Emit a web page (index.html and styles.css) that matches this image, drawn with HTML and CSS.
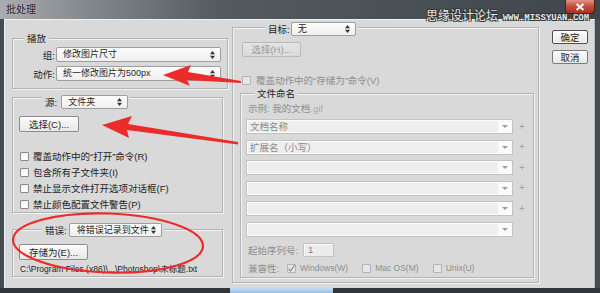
FILE: index.html
```html
<!DOCTYPE html>
<html lang="zh-CN">
<head>
    <meta charset="UTF-8">
    <title>批处理</title>
    <link rel="stylesheet" href="styles.css">
</head>
<body>
    <div class="window">
        <div class="titlebar">
            <span class="title">批处理</span>
            <span class="close">
                <svg width="10" height="8" viewBox="0 0 10 8"><path d="M1.5 1 8.5 7 M8.5 1 1.5 7" stroke="#fff" stroke-width="2"/></svg>
            </span>
        </div>
        <div class="watermark">思缘设计论坛 <span class="site">WWW.MISSYUAN.COM</span></div>

        <div class="client">
            <div class="col-left">
                <div class="group g-play">
                    <div class="group-head legend-play"><span>播放</span></div>
                    <div class="field-row first">
                        <span class="label">组:</span>
                        <div class="select w-action"><span>修改图片尺寸</span><svg class="updown" width="5" height="8" viewBox="0 0 5 8"><path d="M0 3.2 2.5 0 5 3.2Z M0 4.8 2.5 8 5 4.8Z"/></svg></div>
                    </div>
                    <div class="field-row">
                        <span class="label">动作:</span>
                        <div class="select w-action"><span>统一修改图片为500px</span><svg class="updown" width="5" height="8" viewBox="0 0 5 8"><path d="M0 3.2 2.5 0 5 3.2Z M0 4.8 2.5 8 5 4.8Z"/></svg></div>
                    </div>
                </div>

                <div class="group g-source">
                    <div class="group-head legend-source">
                        <span class="head-label">源:</span>
                        <div class="select small w-source"><span>文件夹</span><svg class="updown" width="5" height="8" viewBox="0 0 5 8"><path d="M0 3.2 2.5 0 5 3.2Z M0 4.8 2.5 8 5 4.8Z"/></svg></div>
                    </div>
                    <div class="btn btn-choose">选择(C)...</div>
                    <div class="checks">
                        <div class="check-row"><span class="box"></span>覆盖动作中的“打开”命令(R)</div>
                        <div class="check-row"><span class="box"></span>包含所有子文件夹(I)</div>
                        <div class="check-row"><span class="box"></span>禁止显示文件打开选项对话框(F)</div>
                        <div class="check-row"><span class="box"></span>禁止颜色配置文件警告(P)</div>
                    </div>
                </div>

                <div class="group g-error">
                    <div class="group-head legend-error">
                        <span class="head-label">错误:</span>
                        <div class="select small w-error"><span>将错误记录到文件</span><svg class="updown" width="5" height="8" viewBox="0 0 5 8"><path d="M0 3.2 2.5 0 5 3.2Z M0 4.8 2.5 8 5 4.8Z"/></svg></div>
                    </div>
                    <div class="btn btn-save">存储为(E)...</div>
                    <div class="path">C:\Program Files (x86)\...\Photoshop\未标题.txt</div>
                </div>
            </div>

            <div class="group col-right">
                <div class="group-head legend-target">
                    <span class="head-label dark">目标:</span>
                    <div class="select small w-target"><span>无</span><svg class="updown" width="5" height="8" viewBox="0 0 5 8"><path d="M0 3.2 2.5 0 5 3.2Z M0 4.8 2.5 8 5 4.8Z"/></svg></div>
                </div>
                <div class="btn disabled btn-choose-h">选择(H)...</div>
                <div class="check-row disabled save-row"><span class="box"></span>覆盖动作中的“存储为”命令(V)</div>

                <div class="group g-naming">
                    <div class="group-head legend-naming"><span>文件命名</span></div>
                    <div class="example">示例: 我的文档<span class="ext">.gif</span></div>
                    <div class="combos">
                        <div class="combo-row"><div class="combo"><span class="field">文档名称</span><span class="arrow"></span></div><span class="plus">+</span></div>
                        <div class="combo-row"><div class="combo"><span class="field">扩展名（小写）</span><span class="arrow"></span></div><span class="plus">+</span></div>
                        <div class="combo-row"><div class="combo"><span class="field"></span><span class="arrow"></span></div><span class="plus">+</span></div>
                        <div class="combo-row"><div class="combo"><span class="field"></span><span class="arrow"></span></div><span class="plus">+</span></div>
                        <div class="combo-row"><div class="combo"><span class="field"></span><span class="arrow"></span></div><span class="plus">+</span></div>
                        <div class="combo-row"><div class="combo"><span class="field"></span><span class="arrow"></span></div></div>
                    </div>
                    <div class="seq-row">
                        <span class="seq-label">起始序列号:</span>
                        <span class="seq-input">1</span>
                    </div>
                    <div class="compat-row">
                        <span class="compat-label">兼容性:</span>
                        <span class="opt"><span class="box checked"><svg width="9" height="9" viewBox="0 0 9 9"><path d="M1.5 4.5 3.5 7 7.8 0.8" fill="none" stroke="#8a8a8a" stroke-width="1.1"/></svg></span>Windows(W)</span>
                        <span class="opt"><span class="box"></span>Mac OS(M)</span>
                        <span class="opt"><span class="box"></span>Unix(U)</span>
                    </div>
                </div>
            </div>

            <div class="col-buttons">
                <div class="btn btn-main">确定</div>
                <div class="btn btn-side">取消</div>
            </div>
        </div>

        <div class="frame-bottom"><span class="glow"></span></div>

        <!-- annotations drawn on top of the screenshot -->
        <svg class="marks" width="600" height="293" viewBox="0 0 600 293">
            <g fill="#ec2b2b">
                <path d="M163 75 L191 65 L188 72 L241 81 L241 83 L187 80 L190 86 Z"/>
                <path d="M102 125 L132 116 L128 124 L238 142 L238 144.5 L127 130 L129 138 Z"/>
            </g>
            <ellipse cx="108" cy="243" rx="95" ry="29.5" fill="none" stroke="#ec2b2b" stroke-width="2.2" transform="rotate(2 108 243)"/>
        </svg>
    </div>
</body>
</html>
```

FILE: styles.css
```css
* {
    box-sizing: border-box;
}
body {
    margin: 0;
    width: 600px;
    height: 293px;
    overflow: hidden;
    font-family: "Liberation Sans", "Noto Sans CJK SC", sans-serif;
    font-size: 9.5px;
    color: #1e1e1e;
}
.window {
    position: relative;
    width: 600px;
    height: 293px;
    display: flex;
    flex-direction: column;
    background: #454c52;
}
.titlebar {
    height: 19px;
    flex: none;
    display: flex;
    justify-content: space-between;
    align-items: flex-start;
    background: linear-gradient(to right, #a9adb0 0, #868b8f 80px, #535a60 220px, #3e454b 100%);
}
.title {
    padding: 4px 0 0 6px;
    font-size: 10px;
    line-height: 12px;
    color: #1a1a1a;
    text-shadow: 0 0 2px rgba(255, 255, 255, 0.5);
}
.close {
    width: 30px;
    height: 14px;
    margin-right: 5px;
    display: flex;
    align-items: center;
    justify-content: center;
    background: linear-gradient(#e0968a, #c9503b 45%, #a8311f);
    border: 1px solid #4a1d16;
    border-top: none;
    border-radius: 0 0 4px 4px;
}
.watermark {
    position: absolute;
    top: 7px;
    left: 426px;
    font-family: "Noto Sans CJK SC", sans-serif;
    font-size: 12px;
    line-height: 15px;
    color: #e6e6e6;
    text-shadow: 1px 1px 0 #333, -1px -1px 0 #333, 1px -1px 0 #333, -1px 1px 0 #333;
    white-space: nowrap;
}
.watermark .site {
    font-family: "Liberation Mono", monospace;
    font-weight: bold;
    font-size: 9px;
    margin-left: 2px;
}

.client {
    flex: 1;
    margin: 0 5px 0 4px;
    padding: 7px 0 0 7px;
    display: flex;
    align-items: flex-start;
    background: #d9d9d9;
    border-top: 1px solid #f0f0f0;
    border-left: 1px solid #f0f0f0;
    border-right: 1px solid #b8b8b8;
}
.frame-bottom {
    height: 5px;
    flex: none;
    display: flex;
    background: #30363b;
}
.frame-bottom .glow {
    margin-left: 230px;
    width: 103px;
    background: linear-gradient(#c6def3, #94bde3);
}

/* group boxes */
.group {
    display: flex;
    flex-direction: column;
    border: 1px solid #b4b4b4;
    box-shadow: inset 1px 1px 0 #f3f3f3, 1px 1px 0 #f3f3f3;
}
.group-head {
    align-self: flex-start;
    display: flex;
    align-items: center;
    background: #d9d9d9;
    line-height: 13px;
}
.col-left {
    width: 216px;
    margin-top: 11px;
    display: flex;
    flex-direction: column;
    align-items: flex-start;
}
.g-play {
    width: 216px;
    padding-bottom: 7px;
}
.legend-play {
    margin: -7px 0 0 11px;
    padding: 0 3px;
    height: 13px;
}
.field-row {
    display: flex;
    align-items: center;
    height: 15px;
    margin-top: 4px;
}
.field-row.first {
    margin-top: 2px;
}
.field-row .label {
    width: 42px;
    text-align: right;
}
.select {
    display: flex;
    align-items: center;
    justify-content: space-between;
    height: 15px;
    padding: 0 5px 0 6px;
    border: 1px solid #9e9e9e;
    border-radius: 2px;
    background: linear-gradient(#fdfdfd, #efefef);
    color: #1e1e1e;
    font-size: 9px;
    line-height: 13px;
    white-space: nowrap;
}
.select.small {
    height: 14px;
}
.updown {
    fill: #333;
    flex: none;
}
.w-action {
    width: 165px;
    margin-left: 1px;
}
.g-source {
    width: 211px;
    margin-top: 8px;
}
.legend-source {
    margin: -3px 0 0 29px;
    padding: 0 2px 0 3px;
}
.head-label {
    margin-right: 4px;
}
.w-source {
    width: 67px;
    height: 13px;
}
.btn {
    display: flex;
    align-items: center;
    justify-content: center;
    height: 16px;
    border: 1px solid #8c8c8c;
    border-radius: 2px;
    background: linear-gradient(#fcfcfc, #e8e8e8);
    line-height: 13px;
    white-space: nowrap;
}
.btn.disabled {
    border-color: #b9b9b9;
    background: linear-gradient(#e4e4e4, #dadada);
    color: #9a9a9a;
}
.btn-choose {
    width: 60px;
    margin: 7px 0 0 6px;
}
.checks {
    margin-top: 16px;
    padding-left: 7px;
}
.check-row {
    display: flex;
    align-items: center;
    height: 16px;
    white-space: nowrap;
}
.box {
    flex: none;
    width: 9px;
    height: 9px;
    margin-right: 4px;
    border: 1px solid #8a8a8a;
    border-radius: 1px;
    background: linear-gradient(#f4f4f4, #fdfdfd);
}
.box svg {
    display: block;
    margin: -1px 0 0 -1px;
}
.check-row.disabled {
    color: #8e8e8e;
}
.disabled .box,
.g-naming .box {
    border-color: #b3b3b3;
    background: #e6e6e6;
}
.g-error {
    width: 211px;
    margin-top: 16px;
    padding-bottom: 1px;
}
.legend-error {
    margin: -7px 0 0 29px;
    padding: 0 2px 0 3px;
}
.legend-error .head-label {
    margin-right: 2px;
}
.w-error {
    width: 93px;
    padding-left: 7px;
}
.btn-save {
    width: 69px;
    margin: 7px 0 0 6px;
}
.path {
    margin: 3px 0 0 7px;
    font-size: 8.5px;
    line-height: 12px;
    white-space: nowrap;
}

/* right side */
.col-right {
    width: 307px;
    margin-left: 4px;
}
.legend-target {
    margin: -6px 0 0 32px;
    padding: 0 2px 0 3px;
}
.legend-target .head-label {
    margin-right: 1px;
}
.w-target {
    width: 65px;
}
.btn-choose-h {
    width: 59px;
    height: 15px;
    margin: 6px 0 0 9px;
}
.save-row {
    height: 14px;
    margin: 16px 0 0 9px;
}
.save-row .box {
    margin-right: 5px;
}
.g-naming {
    width: 294px;
    margin: 6px 0 4px 7px;
    padding-bottom: 2px;
    color: #8e8e8e;
}
.legend-naming {
    margin: -7px 0 0 13px;
    padding: 0 3px;
    height: 13px;
    color: #1e1e1e;
}
.example {
    margin: 2px 0 0 7px;
    line-height: 13px;
}
.example .ext {
    color: #a8a8a8;
}
.combos {
    margin: 4px 0 0 5px;
    display: flex;
    flex-direction: column;
    gap: 5.6px;
}
.combo-row {
    display: flex;
    align-items: center;
    height: 15px;
}
.combo {
    display: flex;
    width: 267px;
    height: 15px;
    padding: 1px;
    border: 1px solid #c2c2c2;
    background: #fbfbfb;
}
.combo .field {
    flex: 1;
    padding-left: 2px;
    background: #eeeeee;
    line-height: 11px;
    color: #8a8a8a;
}
.combo .arrow {
    width: 13px;
    display: flex;
    align-items: center;
    justify-content: center;
}
.combo .arrow::after {
    content: "";
    border-top: 3px solid #9c9c9c;
    border-left: 3px solid transparent;
    border-right: 3px solid transparent;
}
.plus {
    margin-left: 6px;
    color: #a2a2a2;
    font-size: 10px;
    line-height: 10px;
}
.seq-row {
    display: flex;
    align-items: center;
    height: 14px;
    margin: 6px 0 0 7px;
}
.seq-label {
    width: 55px;
}
.seq-input {
    width: 31px;
    height: 14px;
    padding-left: 4px;
    border: 1px solid #c2c2c2;
    box-shadow: inset 1px 1px 0 #fafafa;
    background: #ececec;
    line-height: 12px;
    color: #7e7e7e;
}
.compat-row {
    display: flex;
    align-items: center;
    height: 13px;
    margin: 5px 0 0 7px;
    white-space: nowrap;
}
.compat-label {
    width: 39px;
}
.opt {
    display: flex;
    align-items: center;
    margin-right: 14px;
    font-size: 8.5px;
}

.col-buttons {
    margin: 3px 0 0 13px;
    display: flex;
    flex-direction: column;
    gap: 6px;
}
.btn-main,
.btn-side {
    width: 36px;
    height: 14px;
}
.btn-main {
    border-color: #4e4e4e;
    box-shadow: inset 0 0 0 1px #fafafa;
}
.btn-side {
    border-color: #7a7a7a;
}

.marks {
    position: absolute;
    left: 0;
    top: 0;
    pointer-events: none;
}
```
